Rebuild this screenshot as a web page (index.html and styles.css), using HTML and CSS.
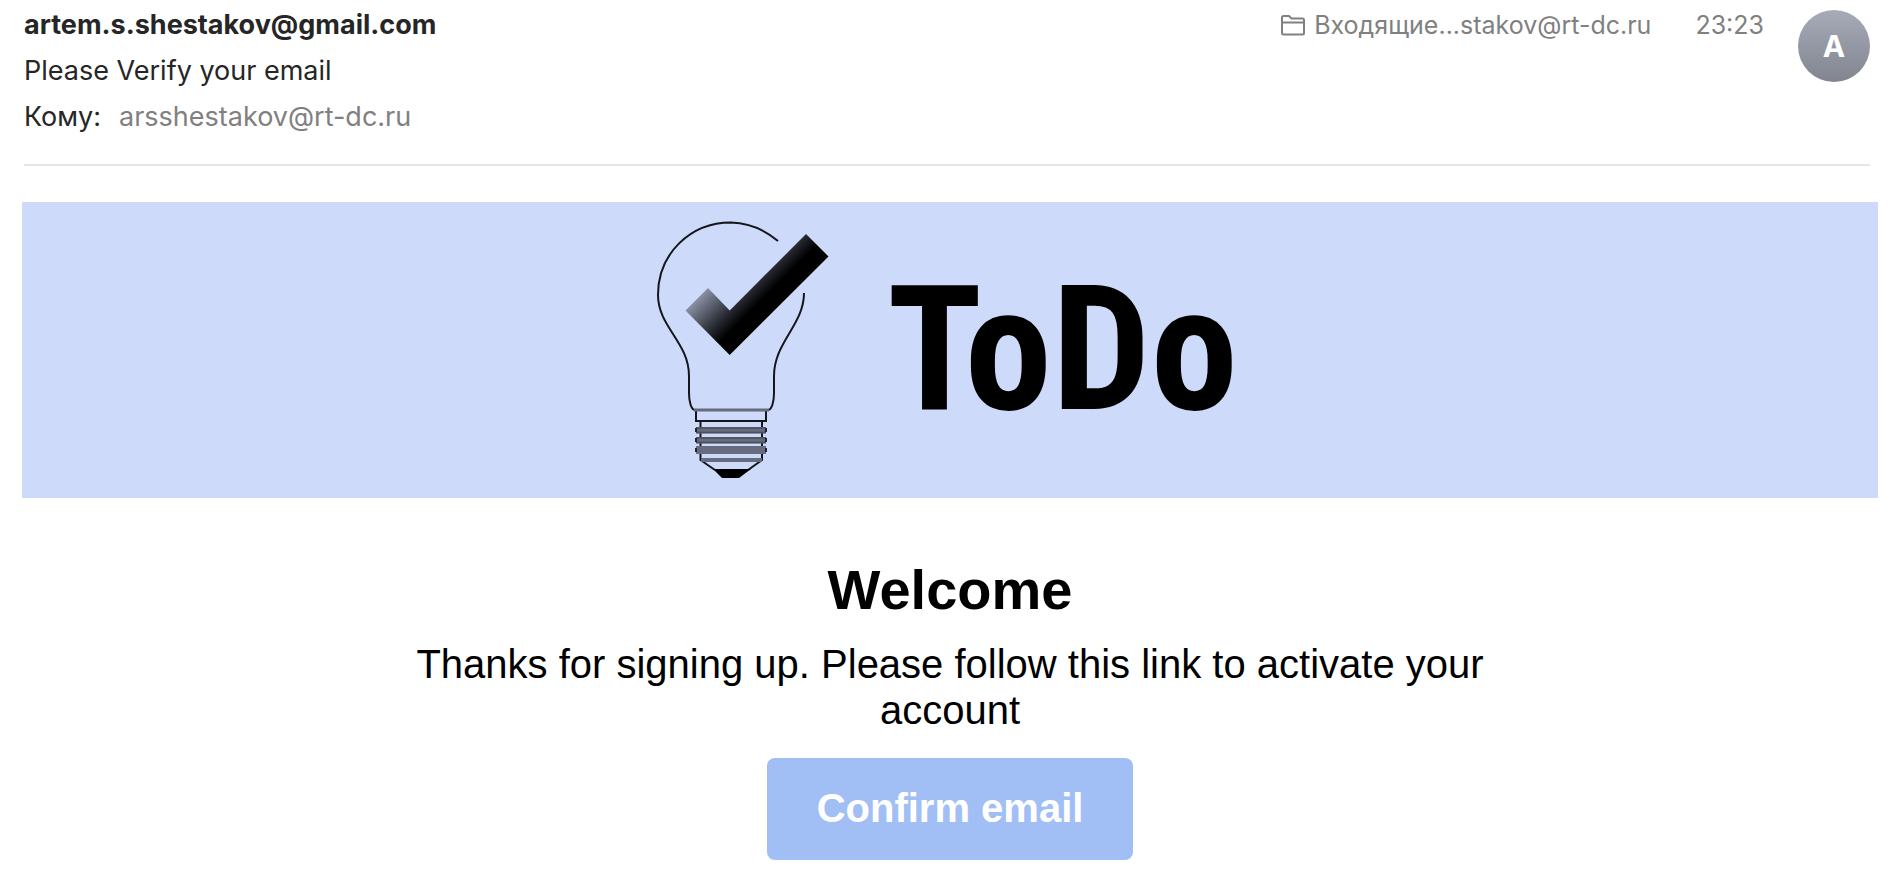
FILE: index.html
```html
<!DOCTYPE html>
<html lang="ru">
<head>
<meta charset="utf-8">
<meta name="viewport" content="width=device-width, initial-scale=1">
<title>Please Verify your email</title>
<link rel="stylesheet" href="styles.css">
</head>
<body>
<header class="mail-header">
  <div class="mail-info">
    <div class="mail-from">artem.s.shestakov@gmail.com</div>
    <div class="mail-subject">Please Verify your email</div>
    <div class="mail-to"><span>Кому:</span><span class="mail-address">arsshestakov@rt-dc.ru</span></div>
  </div>
  <div class="mail-meta">
    <div class="mailbox">
      <svg class="folder-icon" viewBox="0 0 26 24" aria-hidden="true">
        <path d="M2 20V4.500a1.500 1.500 0 0 1 1.500-1.500h5.500l2.500 2.500H22.500a1.500 1.500 0 0 1 1.500 1.500v13a1.500 1.500 0 0 1-1.500 1.500H3.500a1.500 1.500 0 0 1-1.500-1.500zM2 9.500h22" fill="none" stroke="currentColor" stroke-width="2" stroke-linejoin="round"/>
      </svg>
      <span>Входящие...stakov@rt-dc.ru</span>
    </div>
    <time class="mail-time">23:23</time>
    <div class="avatar">A</div>
  </div>
</header>
<main class="mail-body">
  <div class="banner">
    <svg class="bulb" viewBox="650 215 185 270" aria-hidden="true">
      <defs>
        <linearGradient id="tick" gradientUnits="userSpaceOnUse" x1="697" y1="299" x2="730" y2="332">
          <stop offset="0" stop-color="#8a91a4"/>
          <stop offset=".66" stop-color="#2a2d35"/>
          <stop offset="1" stop-color="#000"/>
        </linearGradient>
      </defs>
      <g fill="none" stroke="#14161b" stroke-width="2">
        <path d="M778 241C765 230 749 223 731 222.500C690 222.500 658 254 658 295C658 327 689 342 689 376V393C689 401 691 410 695 410M804 293C804 325 774 342 774 376V393C774 401 772 410 768 410"/>
        <path d="M696 410V421H766V410M700.500 421V460L715 470M762 421V460L748 470"/>
      </g>
      <g fill="#666b7d">
        <path d="M694 408.500h75v3h-75z"/>
        <path d="M696 427h70v6.500h-70zM696 437h70v6.500h-70zM696 446h70v8h-70zM701 458h61v4h-61z"/>
      </g>
      <path d="M696 428h70M696 432.500h70M696 438h70M696 442.500h70" stroke="#4b4f5d" stroke-width="1.500"/>
      <path d="M696 428v4M766 428v4M696 438v4M766 438v4M696 448v4M766 448v4" stroke="#22252c" stroke-width="2"/>
      <path d="M713 469h38l-12 9h-17z"/>
      <path d="M685.500 310.500L708 288l21.700 22.500L806 234l22.500 22.500L729.700 355z" fill="url(#tick)"/>
    </svg>
    <span class="brand">ToDo</span>
  </div>
  <section class="message">
    <h1 class="title">Welcome</h1>
    <p class="text">Thanks for signing up. Please follow this link to activate your account</p>
    <a class="confirm" href="#">Confirm email</a>
  </section>
</main>
</body>
</html>
```
FILE: styles.css
```css
* {
  box-sizing: border-box;
}

body {
  margin: 0;
  background: #fff;
  color: #262626;
  font-family: Inter, "Liberation Sans", sans-serif;
  font-size: 27px;
  line-height: 46px;
}

.mail-header {
  display: flex;
  justify-content: space-between;
  margin: 0 26px 0 24px;
  padding-bottom: 24px;
  border-bottom: 2px solid #e6e6e6;
}

.mail-info {
  padding-top: 2px;
}

.mail-from {
  font-weight: 700;
}

.mail-to {
  display: flex;
  gap: 18px;
}

.mail-address,
.mail-meta {
  color: #808080;
}

.mail-meta {
  display: flex;
  align-items: flex-start;
  padding-top: 2px;
  font-size: 25px;
}

.mailbox {
  display: flex;
  align-items: center;
  gap: 8px;
  margin-right: 44px;
}

.folder-icon {
  width: 26px;
  height: 24px;
}

.mail-time {
  margin-right: 34px;
}

.avatar {
  display: flex;
  align-items: center;
  justify-content: center;
  width: 72px;
  height: 72px;
  margin-top: 8px;
  border-radius: 50%;
  background: linear-gradient(#a6abb8, #82858f);
  color: #fff;
  font-size: 30px;
  font-weight: 700;
}

.mail-body {
  margin: 36px 18px 0 22px;
  color: #000;
  font-family: "Liberation Sans", Arial, sans-serif;
}

.banner {
  display: flex;
  align-items: center;
  justify-content: center;
  gap: 52px;
  height: 296px;
  padding-right: 12px;
  background: #cddafa;
}

.bulb {
  width: 185px;
  height: 270px;
}

.brand {
  font-family: "Liberation Sans Narrow", "Roboto Condensed", "Open Sans Condensed", Roboto, sans-serif;
  font-size: 175px;
  font-weight: 700;
  line-height: 270px;
}

.message {
  display: flex;
  flex-direction: column;
  align-items: center;
  max-width: 1160px;
  margin: 0 auto;
  padding-top: 60px;
  text-align: center;
}

.title {
  margin: 0;
  font-size: 56px;
  font-weight: 700;
  line-height: 64px;
}

.text {
  margin: 19px 0 25px;
  font-size: 40px;
  line-height: 46px;
}

.confirm {
  padding: 27px 50px 29px;
  border-radius: 8px;
  background: #a1bff5;
  color: #fff;
  font-size: 40px;
  font-weight: 700;
  text-decoration: none;
}
```
